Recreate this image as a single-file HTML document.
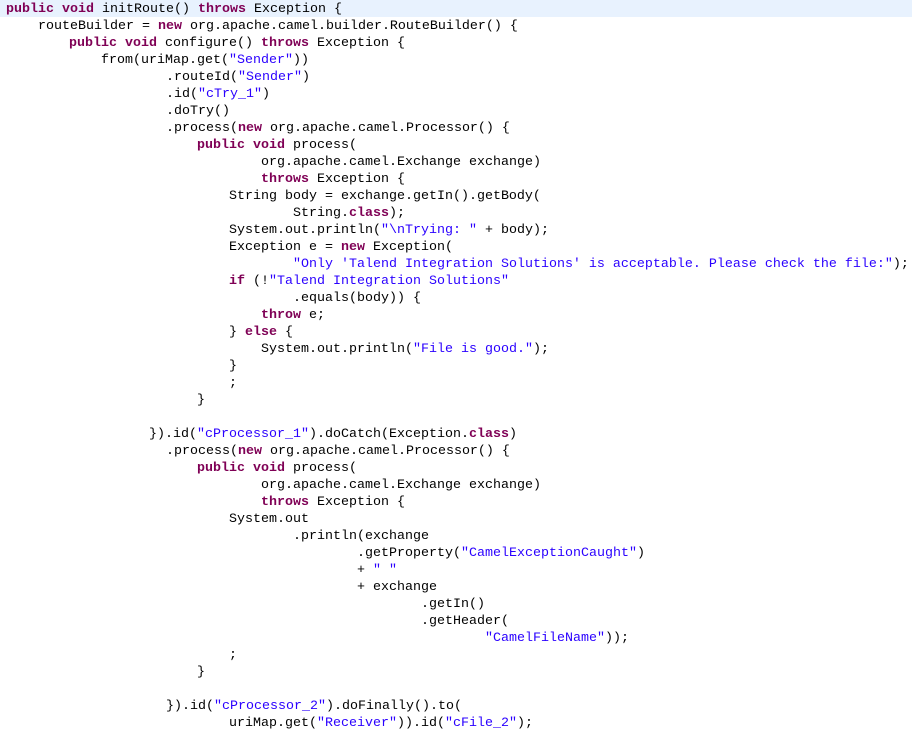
<!DOCTYPE html>
<html><head><meta charset="utf-8"><style>
body{margin:0;width:912px;height:729px;overflow:hidden;background:#fff;position:relative;font-family:"Liberation Mono",monospace;font-size:13.33px;color:#000}
#w{position:absolute;left:0;top:1px;width:912px;height:729px}
.l{position:absolute;height:17px;line-height:17px;white-space:pre}
.hl{left:0;width:912px;background:#e8f2fe}
b{color:#7f0055;font-weight:bold}
s{color:#2a00ff;text-decoration:none}
</style></head><body>
<div class="l hl" style="top:0"></div>
<div id="w">
<div class="l" style="top:0;left:6px"><b>public</b> <b>void</b> initRoute() <b>throws</b> Exception {</div>
<div class="l" style="top:17px;left:38px">routeBuilder = <b>new</b> org.apache.camel.builder.RouteBuilder() {</div>
<div class="l" style="top:34px;left:69px"><b>public</b> <b>void</b> configure() <b>throws</b> Exception {</div>
<div class="l" style="top:51px;left:101px">from(uriMap.get(<s>"Sender"</s>))</div>
<div class="l" style="top:68px;left:166px">.routeId(<s>"Sender"</s>)</div>
<div class="l" style="top:85px;left:166px">.id(<s>"cTry_1"</s>)</div>
<div class="l" style="top:102px;left:166px">.doTry()</div>
<div class="l" style="top:119px;left:166px">.process(<b>new</b> org.apache.camel.Processor() {</div>
<div class="l" style="top:136px;left:197px"><b>public</b> <b>void</b> process(</div>
<div class="l" style="top:153px;left:261px">org.apache.camel.Exchange exchange)</div>
<div class="l" style="top:170px;left:261px"><b>throws</b> Exception {</div>
<div class="l" style="top:187px;left:229px">String body = exchange.getIn().getBody(</div>
<div class="l" style="top:204px;left:293px">String.<b>class</b>);</div>
<div class="l" style="top:221px;left:229px">System.out.println(<s>"\nTrying: "</s> + body);</div>
<div class="l" style="top:238px;left:229px">Exception e = <b>new</b> Exception(</div>
<div class="l" style="top:255px;left:293px"><s>"Only 'Talend Integration Solutions' is acceptable. Please check the file:"</s>);</div>
<div class="l" style="top:272px;left:229px"><b>if</b> (!<s>"Talend Integration Solutions"</s></div>
<div class="l" style="top:289px;left:293px">.equals(body)) {</div>
<div class="l" style="top:306px;left:261px"><b>throw</b> e;</div>
<div class="l" style="top:323px;left:229px">} <b>else</b> {</div>
<div class="l" style="top:340px;left:261px">System.out.println(<s>"File is good."</s>);</div>
<div class="l" style="top:357px;left:229px">}</div>
<div class="l" style="top:374px;left:229px">;</div>
<div class="l" style="top:391px;left:197px">}</div>
<div class="l" style="top:425px;left:149px">}).id(<s>"cProcessor_1"</s>).doCatch(Exception.<b>class</b>)</div>
<div class="l" style="top:442px;left:166px">.process(<b>new</b> org.apache.camel.Processor() {</div>
<div class="l" style="top:459px;left:197px"><b>public</b> <b>void</b> process(</div>
<div class="l" style="top:476px;left:261px">org.apache.camel.Exchange exchange)</div>
<div class="l" style="top:493px;left:261px"><b>throws</b> Exception {</div>
<div class="l" style="top:510px;left:229px">System.out</div>
<div class="l" style="top:527px;left:293px">.println(exchange</div>
<div class="l" style="top:544px;left:357px">.getProperty(<s>"CamelExceptionCaught"</s>)</div>
<div class="l" style="top:561px;left:357px">+ <s>" "</s></div>
<div class="l" style="top:578px;left:357px">+ exchange</div>
<div class="l" style="top:595px;left:421px">.getIn()</div>
<div class="l" style="top:612px;left:421px">.getHeader(</div>
<div class="l" style="top:629px;left:485px"><s>"CamelFileName"</s>));</div>
<div class="l" style="top:646px;left:229px">;</div>
<div class="l" style="top:663px;left:197px">}</div>
<div class="l" style="top:697px;left:166px">}).id(<s>"cProcessor_2"</s>).doFinally().to(</div>
<div class="l" style="top:714px;left:229px">uriMap.get(<s>"Receiver"</s>)).id(<s>"cFile_2"</s>);</div>
</div>
</body></html>
